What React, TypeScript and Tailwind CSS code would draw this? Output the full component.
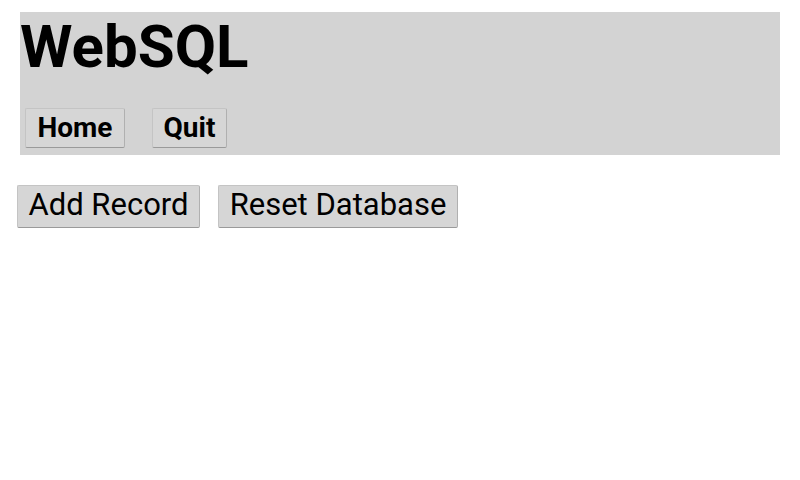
import React from "react";

const Btn = ({ label, bold, className }: { label: string; bold?: boolean; className?: string }) => (
  <button
    className={`bg-[#d6d6d6] border border-[#c4c4c4] border-b-[#9a9a9a] border-r-[#b0b0b0] rounded-[2px] text-black leading-[1.17] ${
      bold ? "font-bold" : "font-normal"
    } ${className ?? ""}`}
  >
    {label}
  </button>
);

const App = () => {
  return (
    <div className="w-[800px] h-[480px] bg-white font-['Roboto',sans-serif] pt-3">
      <header className="mx-5 h-[143px] bg-[#d3d3d3] flex flex-col">
        <h1 className="text-[60px] font-bold leading-[1.17] text-black">WebSQL</h1>
        <nav className="flex gap-[27px] ml-[5px] mt-[26px]">
          <Btn label="Home" bold className="text-[28px] w-[100px] h-[40px] pt-[1px]" />
          <Btn label="Quit" bold className="text-[28px] w-[75px] h-[40px] pt-[1px]" />
        </nav>
      </header>
      <div className="flex gap-[18px] ml-[17px] mt-[30px]">
        <Btn label="Add Record" className="text-[31px] w-[183px] h-[43px] pb-[3px]" />
        <Btn label="Reset Database" className="text-[31px] w-[240px] h-[43px] pb-[3px]" />
      </div>
    </div>
  );
};

export default App;
